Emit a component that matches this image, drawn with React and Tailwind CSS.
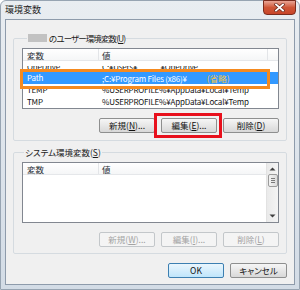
import React from 'react';

const Btn = ({ children, disabled, primary, className = '' }) => (
    <div
        className={`h-[15px] w-[56px] rounded-[2px] border flex items-center justify-center text-[8.5px] leading-none ${
            disabled
                ? 'border-[#c3c7ca] bg-[#f4f4f4] text-[#a3a3a3]'
                : primary
                ? 'border-[#3c7fb1] bg-gradient-to-b from-[#eaf6fd] to-[#bfe5fb] text-[#111]'
                : 'border-[#8e8f8f] bg-gradient-to-b from-[#f6f6f6] to-[#d8d8d8] text-[#111]'
        } ${className}`}
    >
        {children}
    </div>
);

const Header = ({ scroll }) => (
    <div className="flex h-[12px] bg-gradient-to-b from-white to-[#f5f6f7] border-b border-[#e5e7ea] text-[8.5px] leading-[12px] text-[#2a2f36]">
        <div className="w-[76px] pl-[4px] border-r border-[#e3e5e8]">変数</div>
        <div className={`${scroll ? 'flex-1' : 'w-[169px] border-r border-[#e3e5e8]'} pl-[3px]`}>値</div>
        {!scroll && <div className="flex-1" />}
    </div>
);

const Row = ({ name, value, selected, extra }) => (
    <div className={`flex h-[12px] text-[8px] tracking-[-0.2px] leading-[12px] ${selected ? 'bg-[#3399ff] text-white' : 'text-[#111]'}`}>
        <div className="w-[76px] pl-[4px] whitespace-nowrap">{name}</div>
        <div className="flex-1 pl-[3px] whitespace-nowrap overflow-hidden">
            {value}
            {extra && <span className="ml-[20px] text-[8.5px] tracking-normal text-[#f3c63f]">{extra}</span>}
        </div>
    </div>
);

export default function App() {
    return (
        <div className="w-[300px] h-[290px] flex flex-col border border-[#97a4b2] rounded-t-[6px] bg-gradient-to-b from-[#e9edf1] to-[#d3dce6] font-['Noto_Sans_CJK_JP','Noto_Sans',sans-serif] [font-feature-settings:'palt']">
            {/* title bar */}
            <div className="h-[18px] flex items-start justify-between">
                <div className="pl-[4px] pt-[3px] text-[9px] leading-[11px] text-[#1b1b1b]">環境変数</div>
                <div className="mr-[3px] -mt-[1px] w-[33px] h-[15px] rounded-b-[4px] border border-[#7a2c1e] bg-gradient-to-b from-[#e9a595] via-[#cf5637] to-[#c8452a] flex items-center justify-center">
                    <svg width="11" height="9" viewBox="0 0 11 9">
                        <path d="M2 1.5 L9 7.5 M9 1.5 L2 7.5" stroke="#6b2a1f" strokeWidth="3.2" strokeLinecap="square" />
                        <path d="M2 1.5 L9 7.5 M9 1.5 L2 7.5" stroke="#ffffff" strokeWidth="1.8" strokeLinecap="square" />
                    </svg>
                </div>
            </div>

            {/* client area */}
            <div className="flex-1 mx-[4px] mb-[4px] border border-[#8e9bab] bg-[#f0f0f0] flex flex-col px-[7px]">
                {/* user variables */}
                <fieldset className="mt-[13px] border border-[#d5dbe0] rounded-[2px] pl-[8px] pr-[7px] pt-[5px] pb-[7px]">
                    <legend className="ml-[5px] px-[1px] text-[8.5px] leading-[10px] text-[#1b1b1b] flex items-center">
                        <span className="inline-block w-[19px] h-[8px] bg-[#c2c2c2] mr-[2px]" />
                        <span className="tracking-[-0.9px]">のユーザー環境変数(<u>U</u>)</span>
                    </legend>
                    <div className="relative">
                        <div className="h-[61px] border border-[#828790] bg-white overflow-hidden">
                            <Header />
                            <div className="h-[11px] overflow-hidden">
                                <div className="mt-[5px] h-[6px] overflow-hidden">
                                    <div className="-mt-[5px]">
                                        <Row name="OneDrive" value="C:¥Users¥　　　¥OneDrive" />
                                    </div>
                                </div>
                            </div>
                            <Row name="Path" value=";C:¥Program Files (x86)¥" extra="(省略)" selected />
                            <Row name="TEMP" value="%USERPROFILE%¥AppData¥Local¥Temp" />
                            <Row name="TMP" value="%USERPROFILE%¥AppData¥Local¥Temp" />
                        </div>
                        <div className="absolute left-[-2px] top-[21px] w-[250px] h-[20px] border-[3px] border-[#f58a1f]" />
                    </div>
                    <div className="mt-[9px] flex justify-end gap-[6px]">
                        <Btn>新規(<u>N</u>)...</Btn>
                        <div className="relative">
                            <Btn>編集(<u>E</u>)...</Btn>
                            <div className="absolute left-[-7px] top-[-5px] w-[68px] h-[25px] border-[3px] border-[#e8101c]" />
                        </div>
                        <Btn>削除(<u>D</u>)</Btn>
                    </div>
                </fieldset>

                {/* system variables */}
                <fieldset className="mt-[6px] border border-[#d5dbe0] rounded-[2px] pl-[8px] pr-[7px] pt-[5px] pb-[6px]">
                    <legend className="ml-[2px] px-[1px] text-[8.5px] leading-[10px] text-[#1b1b1b]">
                        システム環境変数(<u>S</u>)
                    </legend>
                    <div className="h-[61px] border border-[#828790] bg-white flex">
                        <div className="flex-1">
                            <Header scroll />
                        </div>
                        <div className="w-[12px] bg-gradient-to-r from-[#eaeaea] to-[#f4f4f4] border-l border-[#e2e2e2] flex flex-col items-center">
                            <svg width="7" height="4" viewBox="0 0 7 4" className="mt-[4px]">
                                <path d="M0.5 3.5 L3.5 0.5 L6.5 3.5 Z" fill="#404040" />
                            </svg>
                            <div className="mt-[3px] w-[10px] h-[13px] rounded-[2px] border border-[#9b9b9b] bg-gradient-to-r from-[#f3f3f3] to-[#dcdcdc] flex flex-col items-center justify-center gap-[1px]">
                                <div className="w-[4px] h-px bg-[#7a7a7a]" />
                                <div className="w-[4px] h-px bg-[#7a7a7a]" />
                                <div className="w-[4px] h-px bg-[#7a7a7a]" />
                            </div>
                            <div className="flex-1" />
                            <svg width="7" height="4" viewBox="0 0 7 4" className="mb-[4px]">
                                <path d="M0.5 0.5 L3.5 3.5 L6.5 0.5 Z" fill="#404040" />
                            </svg>
                        </div>
                    </div>
                    <div className="mt-[9px] flex justify-end gap-[6px]">
                        <Btn disabled>新規(<u>W</u>)...</Btn>
                        <Btn disabled>編集(<u>I</u>)...</Btn>
                        <Btn disabled>削除(<u>L</u>)</Btn>
                    </div>
                </fieldset>

                {/* footer */}
                <div className="mt-[9px] flex justify-end gap-[6px]">
                    <Btn primary>OK</Btn>
                    <Btn className="w-[57px]">キャンセル</Btn>
                </div>
            </div>
        </div>
    );
}
